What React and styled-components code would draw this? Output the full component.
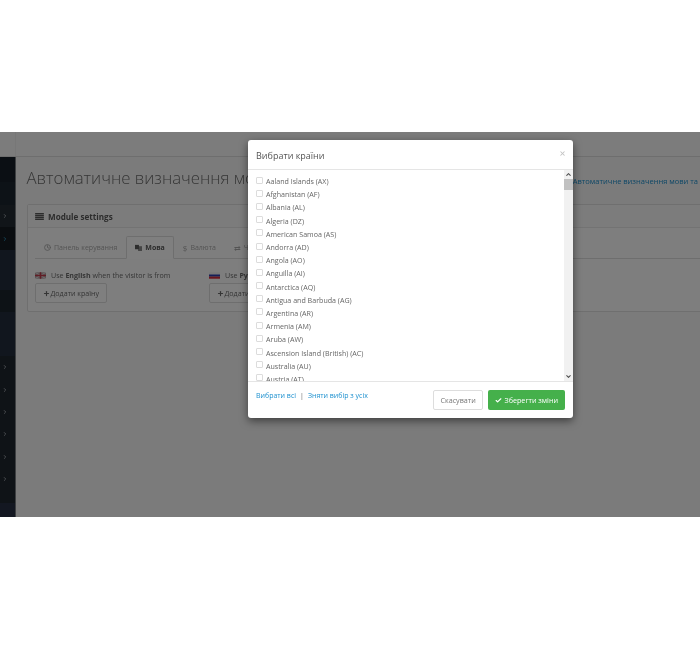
import React from 'react';
import styled, { createGlobalStyle } from 'styled-components';
import { Check, ChevronDown, ChevronRight, ChevronUp, Clock, Plus, X } from 'lucide-react';

const GlobalStyle = createGlobalStyle`
  html, body {
    margin: 0;
    padding: 0;
    background: #fff;
  }
  body {
    font-family: "Open Sans", "Liberation Sans", sans-serif;
  }
`;

const countries = [
  'Aaland Islands (AX)',
  'Afghanistan (AF)',
  'Albania (AL)',
  'Algeria (DZ)',
  'American Samoa (AS)',
  'Andorra (AD)',
  'Angola (AO)',
  'Anguilla (AI)',
  'Antarctica (AQ)',
  'Antigua and Barbuda (AG)',
  'Argentina (AR)',
  'Armenia (AM)',
  'Aruba (AW)',
  'Ascension Island (British) (AC)',
  'Australia (AU)',
  'Austria (AT)',
];

const sideRows = [
  { h: 25, bg: '#161f28' },
  { h: 23, bg: '#1b252e' },
  { h: 22, bg: '#222a32', chevron: true },
  { h: 23, bg: '#151b20', chevron: true, active: true },
  { h: 40, bg: '#222c3c' },
  { h: 22, bg: '#1b252d' },
  { h: 44, bg: '#222c3c' },
  { h: 22.4, bg: '#1e262e', chevron: true },
  { h: 22.4, bg: '#1e262e', chevron: true },
  { h: 22.4, bg: '#1e262e', chevron: true },
  { h: 22.4, bg: '#1e262e', chevron: true },
  { h: 22.4, bg: '#1e262e', chevron: true },
  { h: 22.4, bg: '#1e262e', chevron: true },
  { h: 13, bg: '#1e262e' },
];

export default function App() {
  return (
    <>
      <GlobalStyle />
      <Shot>
        <Header>
          <HeaderLogo />
        </Header>
        <Below>
          <Sidebar>
            {sideRows.map((row, i) => (
              <SideRow key={i} $h={row.h} $bg={row.bg} $active={row.active}>
                {row.chevron && <ChevronRight size={6} strokeWidth={3.5} />}
              </SideRow>
            ))}
            <SideFoot />
          </Sidebar>
          <Content>
            <TitleRow>
              <Title>Автоматичне визначення мови та</Title>
              <Crumb>Автоматичне визначення мови та</Crumb>
            </TitleRow>
            <Panel>
              <PanelHeading>
                <ListGlyph viewBox="0 0 10 8">
                  <path d="M0 0h10v1.6H0zM0 2.2h10v1.6H0zM0 4.4h10V6H0zM0 6.6h10v1.4H0z" fill="currentColor" />
                </ListGlyph>
                Module settings
              </PanelHeading>
              <PanelBody>
                <Tabs>
                  <Tab>
                    <Clock size={7} strokeWidth={3} />
                    Панель керування
                  </Tab>
                  <Tab $active>
                    <LangGlyph viewBox="0 0 8 8">
                      <path d="M0 1h4.5v5H0z" fill="currentColor" />
                      <path d="M3.5 2.5H8V8H3.5z" fill="currentColor" opacity=".7" />
                    </LangGlyph>
                    Мова
                  </Tab>
                  <Tab>
                    <TabSymbol>$</TabSymbol>
                    Валюта
                  </Tab>
                  <Tab>
                    <TabSymbol>⇄</TabSymbol>
                    Часовий пояс
                  </Tab>
                </Tabs>
                <LangColumns>
                  <LangColumn>
                    <LangLine>
                      <FlagGb viewBox="0 0 12 7">
                        <rect width="12" height="7" fill="#b5a7aa" />
                        <path d="M0 0l12 7M12 0L0 7" stroke="#ece6e6" strokeWidth="1" />
                        <path d="M6 0v7M0 3.5h12" stroke="#c23b4a" strokeWidth="1.6" />
                      </FlagGb>
                      <span>Use <b>English</b> when the visitor is from</span>
                    </LangLine>
                    <AddButton>
                      <Plus size={7} strokeWidth={4} />
                      Додати країну
                    </AddButton>
                  </LangColumn>
                  <LangColumn>
                    <LangLine>
                      <FlagRu viewBox="0 0 12 7">
                        <rect width="12" height="2.4" fill="#f0f0f0" />
                        <rect y="2.4" width="12" height="2.3" fill="#2c3fb0" />
                        <rect y="4.7" width="12" height="2.3" fill="#d42c3c" />
                      </FlagRu>
                      <span>Use <b>Русский</b> when the visitor is from</span>
                    </LangLine>
                    <AddButton>
                      <Plus size={7} strokeWidth={4} />
                      Додати країну
                    </AddButton>
                  </LangColumn>
                </LangColumns>
              </PanelBody>
            </Panel>
          </Content>
        </Below>
        <Backdrop />
        <Modal>
          <ModalHeader>
            <ModalTitle>Вибрати країни</ModalTitle>
            <CloseMark><X size={7} strokeWidth={3.5} /></CloseMark>
          </ModalHeader>
          <ModalBody>
            <CountryList>
              {countries.map((name) => (
                <CountryRow key={name}>
                  <CheckBox />
                  <span>{name}</span>
                </CountryRow>
              ))}
            </CountryList>
            <ScrollBar>
              <ScrollArrow><ChevronUp size={7} strokeWidth={3.5} /></ScrollArrow>
              <ScrollTrack><ScrollThumb /></ScrollTrack>
              <ScrollArrow><ChevronDown size={7} strokeWidth={3.5} /></ScrollArrow>
            </ScrollBar>
          </ModalBody>
          <ModalFooter>
            <FooterLinks>
              <FooterLink>Вибрати всі</FooterLink>
              <Divider>|</Divider>
              <FooterLink>Зняти вибір з усіх</FooterLink>
            </FooterLinks>
            <FooterButtons>
              <CancelButton>Скасувати</CancelButton>
              <SaveButton>
                <Check size={7} strokeWidth={4} />
                Зберегти зміни
              </SaveButton>
            </FooterButtons>
          </ModalFooter>
        </Modal>
      </Shot>
    </>
  );
}

const Shot = styled.div`
  position: relative;
  display: flex;
  flex-direction: column;
  width: 700px;
  height: 385px;
  margin-top: 132px;
  overflow: hidden;
  background: #f6f6f6;
  filter: blur(0.4px);
`;

const Header = styled.div`
  flex: 0 0 25px;
  background: #f8f8f8;
  border-bottom: 1px solid #dcdcdc;
  box-sizing: border-box;
`;

const HeaderLogo = styled.div`
  width: 16px;
  height: 100%;
  border-right: 1px solid #eee;
  box-sizing: border-box;
`;

const Below = styled.div`
  display: flex;
  flex: 1;
  min-height: 0;
`;

const Sidebar = styled.div`
  flex: 0 0 16px;
  display: flex;
  flex-direction: column;
  overflow: hidden;
  border-right: 1px solid #7d8084;
  box-sizing: border-box;
`;

const SideRow = styled.div`
  flex: 0 0 ${(p) => p.$h}px;
  display: flex;
  align-items: center;
  padding-left: 2px;
  background: ${(p) => p.$bg};
  color: ${(p) => (p.$active ? '#2f8fb8' : '#a0a6ad')};
  box-sizing: border-box;
`;

const SideFoot = styled.div`
  flex: 1;
  background: #262f42;
`;

const Content = styled.div`
  flex: 1;
  min-width: 0;
  padding-left: 11px;
  display: flex;
  flex-direction: column;
`;

const TitleRow = styled.div`
  display: flex;
  justify-content: space-between;
  align-items: center;
  height: 47px;
  white-space: nowrap;
`;

const Title = styled.div`
  font-size: 16.8px;
  font-weight: 300;
  color: #6c6c6c;
  margin-top: -7px;
  margin-left: -0.5px;
`;

const Crumb = styled.div`
  font-size: 7.5px;
  color: #1e91cf;
  margin-right: 2px;
`;

const Panel = styled.div`
  margin-right: -20px;
  height: 108px;
  border: 1px solid #dfdfdf;
  border-radius: 2px;
  background: #fdfdfd;
  box-sizing: border-box;
`;

const PanelHeading = styled.div`
  display: flex;
  align-items: center;
  gap: 4px;
  height: 22px;
  padding-left: 7px;
  font-size: 8.1px;
  font-weight: 700;
  color: #595959;
  background: #f8f8f8;
  border-bottom: 1px solid #e6e6e6;
`;

const ListGlyph = styled.svg`
  width: 9px;
  height: 7px;
`;

const PanelBody = styled.div`
  padding: 8px 7px 0;
`;

const Tabs = styled.div`
  display: flex;
  height: 22px;
  border-bottom: 1px solid #ddd;
`;

const Tab = styled.div`
  display: flex;
  align-items: center;
  gap: 3px;
  padding: 0 8px;
  height: 23px;
  font-size: 7px;
  white-space: nowrap;
  box-sizing: border-box;
  color: ${(p) => (p.$active ? '#5a5a5a' : '#a8a8a8')};
  font-weight: ${(p) => (p.$active ? 700 : 400)};
  background: ${(p) => (p.$active ? '#fff' : 'transparent')};
  border: 1px solid ${(p) => (p.$active ? '#ddd' : 'transparent')};
  border-bottom-color: ${(p) => (p.$active ? '#fff' : 'transparent')};
  border-radius: 2px 2px 0 0;
`;

const TabSymbol = styled.span`
  font-size: 8px;
`;

const LangGlyph = styled.svg`
  width: 7px;
  height: 7px;
`;

const LangColumns = styled.div`
  display: flex;
  padding-top: 10px;
`;

const LangColumn = styled.div`
  flex: 0 0 174px;
`;

const LangLine = styled.div`
  display: flex;
  align-items: center;
  gap: 5px;
  height: 12px;
  font-size: 7.1px;
  color: #6c6c6c;
  white-space: nowrap;
`;

const FlagGb = styled.svg`
  width: 11px;
  height: 7px;
  flex: none;
`;

const FlagRu = styled(FlagGb)``;

const AddButton = styled.div`
  display: flex;
  align-items: center;
  gap: 1px;
  width: fit-content;
  height: 20px;
  margin-top: 2px;
  padding: 0 6.5px;
  font-size: 7.1px;
  color: #6a6a6a;
  background: #fff;
  border: 1px solid #ddd;
  border-radius: 2px;
  box-sizing: border-box;
`;

const Backdrop = styled.div`
  position: absolute;
  inset: 0;
  background: rgba(0, 0, 0, 0.5);
`;

const Modal = styled.div`
  position: absolute;
  left: 248px;
  top: 8px;
  width: 325px;
  height: 278px;
  display: flex;
  flex-direction: column;
  background: #fff;
  border-radius: 3px;
  box-shadow: 0 3px 9px rgba(0, 0, 0, 0.5);
  overflow: hidden;
`;

const ModalHeader = styled.div`
  flex: 0 0 30px;
  display: flex;
  align-items: center;
  justify-content: space-between;
  padding: 0 7px 0 8px;
  border-bottom: 1px solid #e5e5e5;
  box-sizing: border-box;
`;

const ModalTitle = styled.div`
  font-size: 9px;
  color: #555;
  margin-top: 1px;
`;

const CloseMark = styled.div`
  display: flex;
  color: #c4c4c4;
  margin-top: -3px;
`;

const ModalBody = styled.div`
  flex: 1;
  min-height: 0;
  display: flex;
`;

const CountryList = styled.div`
  flex: 1;
  min-width: 0;
  padding: 4.5px 8px 0;
  overflow: hidden;
`;

const CountryRow = styled.div`
  display: flex;
  align-items: center;
  gap: 3px;
  height: 13.2px;
  font-size: 7.1px;
  color: #666;
  white-space: nowrap;
`;

const CheckBox = styled.div`
  width: 5px;
  height: 5px;
  margin-top: -2px;
  background: #fff;
  border: 1px solid #dcdcdc;
  border-radius: 1px;
`;

const ScrollBar = styled.div`
  flex: 0 0 9px;
  display: flex;
  flex-direction: column;
  background: #f1f1f1;
`;

const ScrollArrow = styled.div`
  flex: 0 0 9px;
  display: flex;
  align-items: center;
  justify-content: center;
  color: #505050;
`;

const ScrollTrack = styled.div`
  flex: 1;
`;

const ScrollThumb = styled.div`
  height: 11px;
  background: #c1c1c1;
`;

const ModalFooter = styled.div`
  flex: 0 0 37px;
  display: flex;
  justify-content: space-between;
  padding: 8px 8px 0;
  border-top: 1px solid #e5e5e5;
  box-sizing: border-box;
`;

const FooterLinks = styled.div`
  display: flex;
  gap: 4px;
  height: 11px;
  align-items: center;
  font-size: 7px;
`;

const FooterLink = styled.span`
  color: #1e91cf;
`;

const Divider = styled.span`
  color: #666;
`;

const FooterButtons = styled.div`
  display: flex;
  gap: 5px;
`;

const CancelButton = styled.div`
  display: flex;
  align-items: center;
  height: 20px;
  padding: 0 6.7px;
  font-size: 7.2px;
  color: #777;
  border: 1px solid #ddd;
  border-radius: 2px;
  box-sizing: border-box;
`;

const SaveButton = styled.div`
  display: flex;
  align-items: center;
  gap: 2px;
  height: 20px;
  padding: 0 7px;
  font-size: 7.2px;
  color: #fff;
  background: #45b04b;
  border-radius: 2px;
  box-sizing: border-box;
`;
